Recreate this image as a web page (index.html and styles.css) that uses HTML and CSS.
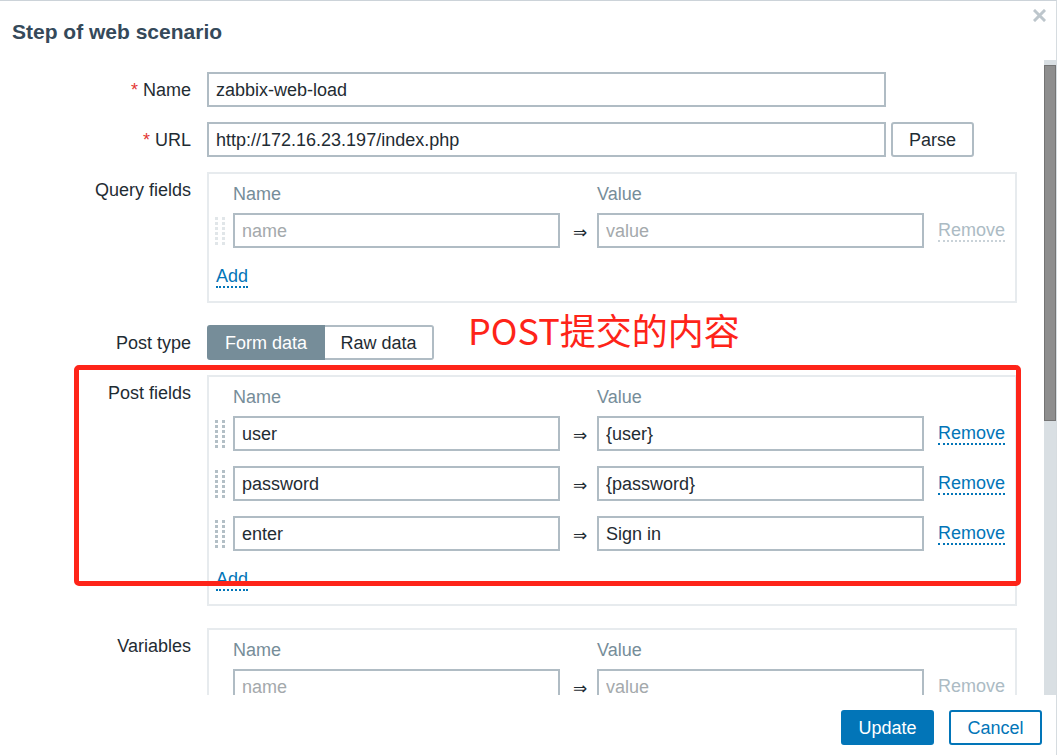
FILE: index.html
```html
<!DOCTYPE html>
<html lang="en">
<head>
<meta charset="utf-8">
<title>Step of web scenario</title>
<link rel="stylesheet" href="styles.css">
</head>
<body>
<div class="dialog">
  <div class="head">
    <h4 class="title">Step of web scenario</h4>
    <span class="close" aria-label="Close">
      <svg width="13" height="13" viewBox="0 0 13 13"><path d="M2 2 L11 11 M11 2 L2 11" stroke="#bdc6cc" stroke-width="3" stroke-linecap="square"/></svg>
    </span>
  </div>
  <div class="body">
    <div class="content">
      <div class="form">
        <div class="lbl"><span class="req">*</span> Name</div>
        <div class="val"><input class="txt wide" value="zabbix-web-load"></div>

        <div class="lbl"><span class="req">*</span> URL</div>
        <div class="val inline"><input class="txt wide" value="http://172.16.23.197/index.php"><button class="btn-grey">Parse</button></div>

        <div class="lbl">Query fields</div>
        <div class="val">
          <div class="pairs">
            <div class="pairs-head"><span></span><span>Name</span><span></span><span>Value</span><span></span></div>
            <div class="pairs-rows">
              <span class="handle faint"></span>
              <input class="txt" placeholder="name">
              <span class="arrow">⇒</span>
              <input class="txt" placeholder="value">
              <span class="link off">Remove</span>
            </div>
            <span class="link add">Add</span>
          </div>
        </div>

        <div class="lbl">Post type</div>
        <div class="val">
          <div class="seg"><span class="seg-on">Form data</span><span class="seg-off">Raw data</span></div>
        </div>

        <div class="lbl">Post fields</div>
        <div class="val">
          <div class="pairs">
            <div class="pairs-head"><span></span><span>Name</span><span></span><span>Value</span><span></span></div>
            <div class="pairs-rows">
              <span class="handle"></span>
              <input class="txt" value="user">
              <span class="arrow">⇒</span>
              <input class="txt" value="{user}">
              <span class="link">Remove</span>

              <span class="handle"></span>
              <input class="txt" value="password">
              <span class="arrow">⇒</span>
              <input class="txt" value="{password}">
              <span class="link">Remove</span>

              <span class="handle"></span>
              <input class="txt" value="enter">
              <span class="arrow">⇒</span>
              <input class="txt" value="Sign in">
              <span class="link">Remove</span>
            </div>
            <span class="link add">Add</span>
          </div>
        </div>

        <div class="lbl">Variables</div>
        <div class="val">
          <div class="pairs">
            <div class="pairs-head"><span></span><span>Name</span><span></span><span>Value</span><span></span></div>
            <div class="pairs-rows">
              <span class="handle none"></span>
              <input class="txt" placeholder="name">
              <span class="arrow">⇒</span>
              <input class="txt" placeholder="value">
              <span class="link off">Remove</span>
            </div>
          </div>
        </div>
      </div>
    </div>
    <div class="scrollbar"><div class="thumb"></div></div>
  </div>
  <div class="foot">
    <button class="btn-main">Update</button>
    <button class="btn-alt">Cancel</button>
  </div>

  <div class="mark-box"></div>
  <div class="mark-text">POST提交的内容</div>
</div>
</body>
</html>
```
FILE: styles.css
```css
html, body {
  margin: 0;
  padding: 0;
  background: #ffffff;
}

body {
  font-family: "Liberation Sans", Arial, sans-serif;
  font-size: 18px;
  color: #1f2c33;
}

.dialog {
  position: relative;
  width: 1057px;
  height: 755px;
  box-sizing: border-box;
  border-top: 1px solid #ccd3d9;
  border-right: 1px solid #d6dce0;
  background: #ffffff;
  overflow: hidden;
}

.head {
  height: 59px;
  display: flex;
  justify-content: space-between;
  align-items: flex-start;
}

.title {
  margin: 0;
  padding: 19px 0 0 12px;
  font-size: 21px;
  line-height: 24px;
  font-weight: bold;
  color: #35495a;
}

.close {
  display: block;
  width: 13px;
  height: 13px;
  margin: 8px 10px 0 0;
}

.close svg {
  display: block;
}

.body {
  display: flex;
  height: 635px;
}

.content {
  flex: 1;
  overflow: hidden;
  padding-top: 12px;
}

.scrollbar {
  width: 12px;
  background: #d9dfe3;
}

.thumb {
  margin-top: 5px;
  height: 356px;
  box-sizing: border-box;
  background: #8e8e8e;
  border: 1px solid #747474;
}

.form {
  display: grid;
  grid-template-columns: 191px 810px;
  column-gap: 16px;
  row-gap: 15px;
  align-items: start;
}

.lbl {
  text-align: right;
  height: 35px;
  line-height: 37px;
  white-space: nowrap;
}

.req {
  color: #e33734;
}

.val.inline {
  display: flex;
  gap: 5px;
}

.txt {
  display: block;
  box-sizing: border-box;
  height: 35px;
  margin: 0;
  padding: 2px 7px 0;
  border: 2px solid #b0bcc4;
  border-radius: 0;
  background: #ffffff;
  font-family: "Liberation Sans", Arial, sans-serif;
  font-size: 18px;
  color: #1f2c33;
  outline: none;
}

.txt::placeholder {
  color: #a4a9ac;
}

.txt.wide {
  width: 679px;
}

.btn-grey {
  box-sizing: border-box;
  width: 83px;
  height: 35px;
  margin: 0;
  padding: 2px 0 0;
  border: 2px solid #b0bcc4;
  border-radius: 3px;
  background: #ffffff;
  font-family: "Liberation Sans", Arial, sans-serif;
  font-size: 18px;
  color: #1f2c33;
}

.pairs {
  box-sizing: border-box;
  width: 810px;
  margin-bottom: 7px;
  padding: 8px 10px 13px 6px;
  border: 2px solid #e7ebee;
}

.pairs-head,
.pairs-rows {
  display: grid;
  grid-template-columns: 18px 327px 37px 327px auto;
  align-items: center;
}

.pairs-head {
  height: 24px;
  line-height: 24px;
  margin-bottom: 7px;
  color: #768d99;
}

.pairs-rows {
  row-gap: 15px;
}

.pairs-rows .txt {
  width: 327px;
}

.handle {
  display: block;
  width: 10px;
  height: 28px;
  background:
    repeating-linear-gradient(to bottom, transparent 0 3px, #ffffff 3px 5px),
    repeating-linear-gradient(to right, #b3bfc6 0 3px, transparent 3px 7px);
}

.handle.faint {
  background:
    repeating-linear-gradient(to bottom, transparent 0 3px, #ffffff 3px 5px),
    repeating-linear-gradient(to right, #e1e6e9 0 3px, transparent 3px 7px);
}

.handle.none {
  background: none;
}

.arrow {
  font-family: "DejaVu Sans", sans-serif;
  font-size: 17px;
  text-align: center;
  padding: 2px 0 0 3px;
}

.link {
  justify-self: start;
  margin-left: 14px;
  display: inline-block;
  line-height: 20px;
  color: #0275b8;
  border-bottom: 2px dotted #0275b8;
}

.link.off {
  color: #acbbc4;
  border-bottom-color: #c9d2d8;
}

.link.add {
  margin: 18px 0 0 1px;
}

.seg {
  display: flex;
  height: 35px;
  line-height: 33px;
}

.seg-on {
  box-sizing: border-box;
  width: 118px;
  height: 35px;
  text-align: center;
  background: #768d99;
  color: #ffffff;
  border: 2px solid #768d99;
  border-radius: 3px 0 0 3px;
}

.seg-off {
  box-sizing: border-box;
  width: 109px;
  height: 35px;
  text-align: center;
  border: 2px solid #b0bcc4;
  border-left: none;
  border-radius: 0 3px 3px 0;
}

.foot {
  height: 60px;
  box-sizing: border-box;
  display: flex;
  justify-content: flex-end;
  align-items: flex-start;
  gap: 15px;
  padding: 15px 14px 0 0;
}

.btn-main,
.btn-alt {
  box-sizing: border-box;
  width: 93px;
  height: 35px;
  margin: 0;
  padding: 2px 0 0;
  border: 2px solid #0275b8;
  border-radius: 3px;
  font-family: "Liberation Sans", Arial, sans-serif;
  font-size: 18px;
}

.btn-main {
  background: #0275b8;
  color: #ffffff;
}

.btn-alt {
  background: #ffffff;
  color: #0275b8;
}

.mark-box {
  position: absolute;
  left: 74px;
  top: 364px;
  width: 947px;
  height: 221px;
  box-sizing: border-box;
  border: 5px solid #fe2419;
  border-radius: 5px;
}

.mark-text {
  position: absolute;
  left: 468px;
  top: 310px;
  font-family: "Noto Sans CJK SC", sans-serif;
  font-size: 36px;
  line-height: 1;
  color: #fe2419;
  white-space: nowrap;
}
```
